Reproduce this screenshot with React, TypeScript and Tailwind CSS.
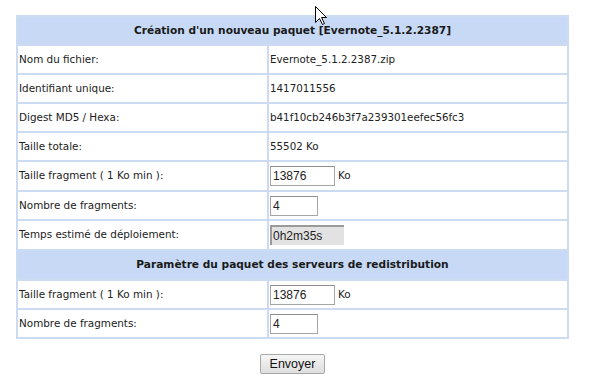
import React from "react";

const font = { fontFamily: '"DejaVu Sans", Verdana, sans-serif' };

function Row({ label, h, last, children }: { label: string; h: string; last?: boolean; children: React.ReactNode }) {
  return (
    <div className={`flex ${h} ${last ? "" : "border-b-2 border-[#cddbf2]"}`}>
      <div className="w-[251px] shrink-0 border-r-2 border-[#cddbf2] flex items-center pl-[1px] text-[10.4px] text-[#222]">
        {label}
      </div>
      <div className="flex-1 flex items-center pl-[1px] text-[10.3px] text-[#222]">{children}</div>
    </div>
  );
}

function Header({ text, h }: { text: string; h: string }) {
  return (
    <div className={`${h} bg-[#c7d9f5] border-b-2 border-[#cddbf2] flex items-center justify-center font-bold text-[10.6px] text-[#1a1a1a]`}>
      {text}
    </div>
  );
}

function Input({ value, w }: { value: string; w: string }) {
  return (
    <div
      className={`${w} h-[20px] border border-[#a5a5a5] border-t-[#8e8e8e] bg-white flex items-center pl-[2px] text-[12px] text-[#222]`}
      style={{ fontFamily: '"Liberation Sans", Arial, sans-serif' }}
    >
      {value}
    </div>
  );
}

export default function App() {
  return (
    <div className="relative w-[600px] h-[383px] bg-white overflow-hidden" style={font}>
      <div className="ml-[16px] pt-[15px] w-[553px]">
        <div className="border-2 border-[#cddbf2]">
          <Header text="Création d'un nouveau paquet [Evernote_5.1.2.2387]" h="h-[29px]" />
          <Row label="Nom du fichier:" h="h-[29px]">Evernote_5.1.2.2387.zip</Row>
          <Row label="Identifiant unique:" h="h-[29px]">1417011556</Row>
          <Row label="Digest MD5 / Hexa:" h="h-[29px]">b41f10cb246b3f7a239301eefec56fc3</Row>
          <Row label="Taille totale:" h="h-[29px]">55502 Ko</Row>
          <Row label="Taille fragment ( 1 Ko min ):" h="h-[30px]">
            <Input value="13876" w="w-[65px]" />
            <span className="ml-[3px] text-[10.4px]">Ko</span>
          </Row>
          <Row label="Nombre de fragments:" h="h-[29px]">
            <Input value="4" w="w-[48px]" />
          </Row>
          <Row label="Temps estimé de déploiement:" h="h-[30px]">
            <div
              className="w-[74px] h-[20px] bg-[#e2e2e2] border-t-2 border-l-2 border-t-[#9a9a9a] border-l-[#9a9a9a] flex items-center pl-[1px] text-[12px] text-[#222]"
              style={{ fontFamily: '"Liberation Sans", Arial, sans-serif' }}
            >
              0h2m35s
            </div>
          </Row>
          <Header text="Paramètre du paquet des serveurs de redistribution" h="h-[30px]" />
          <Row label="Taille fragment ( 1 Ko min ):" h="h-[29px]">
            <Input value="13876" w="w-[65px]" />
            <span className="ml-[3px] text-[10.4px]">Ko</span>
          </Row>
          <Row label="Nombre de fragments:" h="h-[27px]" last>
            <Input value="4" w="w-[48px]" />
          </Row>
        </div>
        <div className="flex justify-center mt-[15px]">
          <button
            className="w-[65px] h-[20px] border border-[#a8a8a8] rounded-[2px] bg-gradient-to-b from-[#f6f6f6] to-[#dedede] text-[12.5px] text-[#111] flex items-center justify-center"
            style={{ fontFamily: '"Liberation Sans", Arial, sans-serif' }}
          >
            Envoyer
          </button>
        </div>
      </div>
      <svg className="absolute left-[315px] top-[6px]" width="13" height="20" viewBox="0 0 13 20">
        <path d="M0.5 0.5 L0.5 16.5 L4.5 12.5 L7.5 18.5 L9.5 17.5 L6.5 11.5 L11.5 11.5 Z" fill="#fff" stroke="#000" strokeWidth="1" />
      </svg>
    </div>
  );
}
